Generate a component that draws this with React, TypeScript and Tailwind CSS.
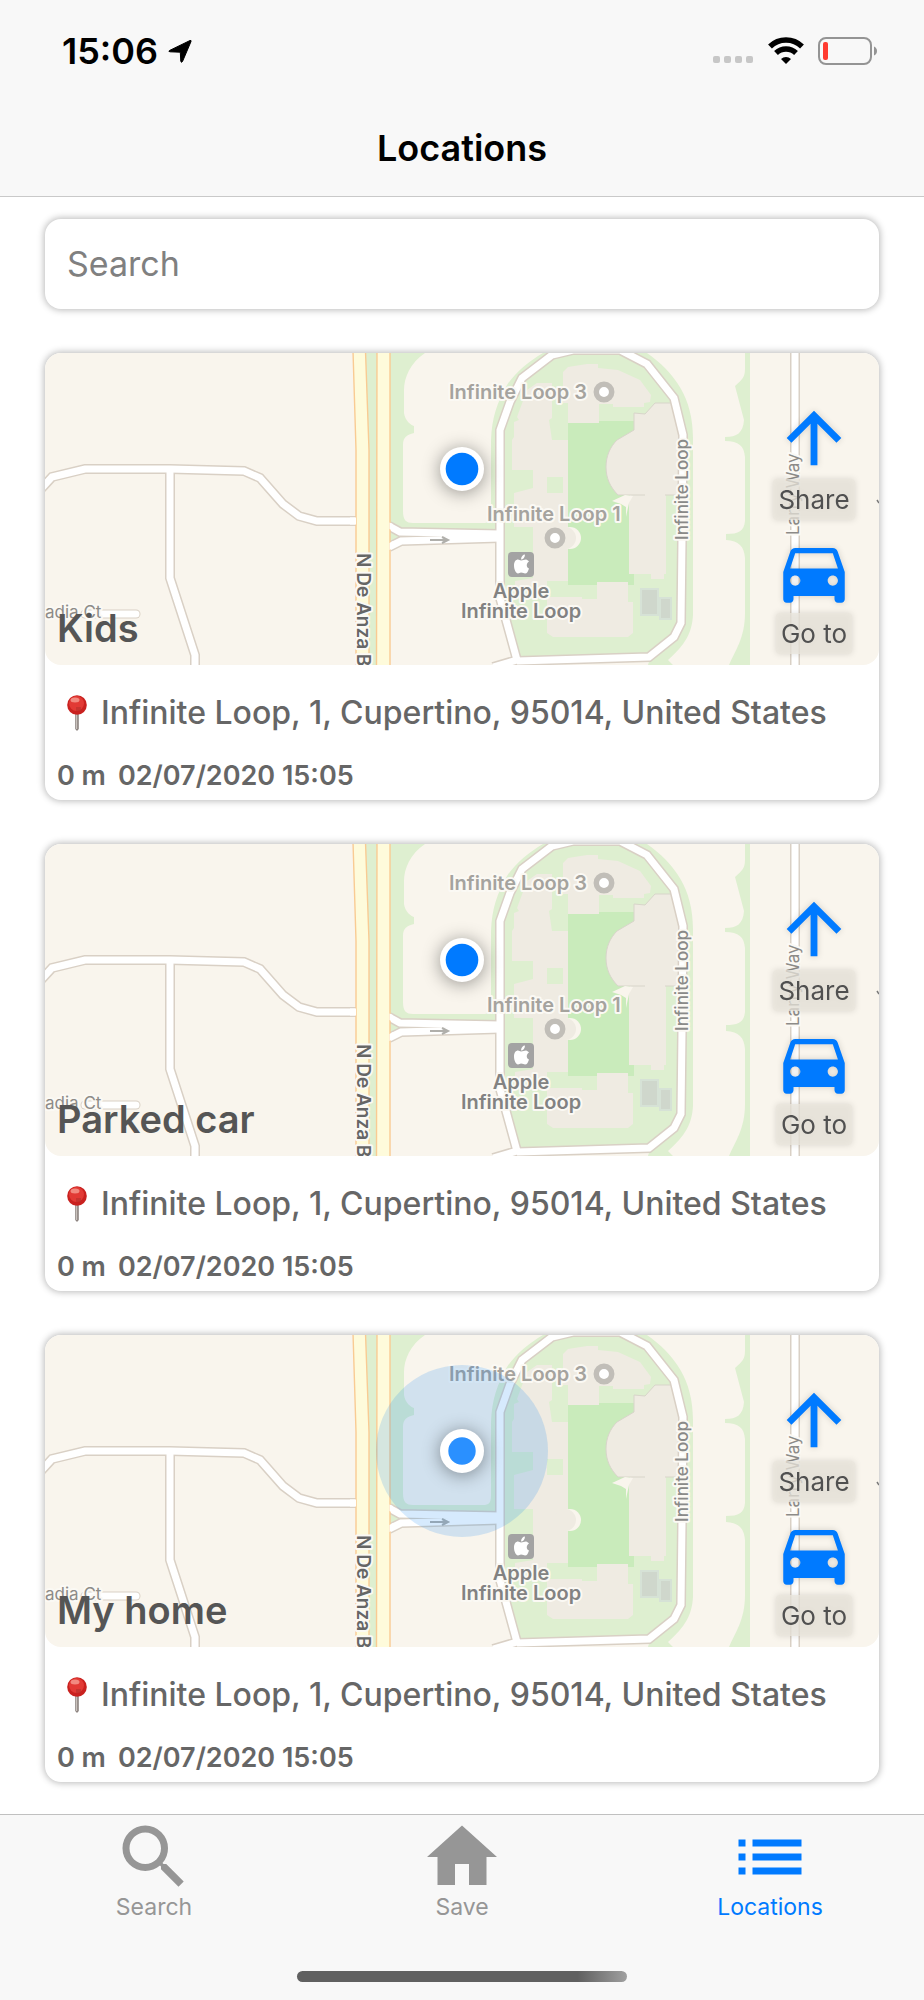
import type { ReactNode } from 'react'

interface SavedLocation {
  id: string
  name: string
  address: string
  distance: string
  savedAt: string
  isNearby?: boolean
}

const LOCATIONS: SavedLocation[] = [
  { id: 'kids', name: 'Kids', address: 'Infinite Loop, 1, Cupertino, 95014, United States', distance: '0 m', savedAt: '02/07/2020 15:05' },
  { id: 'car',  name: 'Parked car', address: 'Infinite Loop, 1, Cupertino, 95014, United States', distance: '0 m', savedAt: '02/07/2020 15:05' },
  { id: 'home', name: 'My home', address: 'Infinite Loop, 1, Cupertino, 95014, United States', distance: '0 m', savedAt: '02/07/2020 15:05', isNearby: true },
]

// every road is drawn twice: a wide casing, then the white surface
const ROADS = [
  'M-4 136L7 124L40 116H125L199 118L215 125L238 151L254 163L272 168H311',
  'M125 116V225L150 302V320',
  'M344 173L355 179L455 181',
  'M344 194L356 188L455 185',
  'M448 314L472 307L455 245V77L465 49L477 25L507 2L528 -3H575L602 11L629 45L638 82L637 187L636 270L629 284L604 304L472 308',
  'M750 -5V320',
]

const ICONS = {
  search: 'M15.5 14h-.79l-.28-.27A6.47 6.47 0 0016 9.5 6.5 6.5 0 109.5 16c1.61 0 3.09-.59 4.23-1.57l.27.28v.79l5 4.99L20.49 19l-4.99-5zm-6 0C7.01 14 5 11.99 5 9.5S7.01 5 9.5 5 14 7.01 14 9.5 11.99 14 9.5 14z',
  home: 'M10 20v-6h4v6h5v-8h3L12 3 2 12h3v8z',
  list: 'M3 13h2v-2H3v2zm0 4h2v-2H3v2zm0-8h2V7H3v2zm4 4h14v-2H7v2zm0 4h14v-2H7v2zM7 7v2h14V7H7z',
  arrow: 'M4 12l1.41 1.41L11 7.83V20h2V7.83l5.58 5.59L20 12l-8-8-8 8z',
  car: 'M18.92 6.01C18.72 5.42 18.16 5 17.5 5h-11c-.66 0-1.21.42-1.42 1.01L3 12v8c0 .55.45 1 1 1h1c.55 0 1-.45 1-1v-1h12v1c0 .55.45 1 1 1h1c.55 0 1-.45 1-1v-8l-2.08-5.99zM6.5 16c-.83 0-1.5-.67-1.5-1.5S5.67 13 6.5 13s1.5.67 1.5 1.5S7.33 16 6.5 16zm11 0c-.83 0-1.5-.67-1.5-1.5s.67-1.5 1.5-1.5 1.5.67 1.5 1.5-.67 1.5-1.5 1.5zM5 11l1.5-4.5h11L19 11H5z',
}

function Icon({ path, className }: { path: string; className: string }) {
  return (
    <svg className={className} viewBox="0 0 24 24" fill="currentColor" aria-hidden="true">
      <path d={path}/>
    </svg>
  )
}

function MapLabel({ children, className, transform, anchor = 'start' }: {
  children: ReactNode; className: string; transform: string; anchor?: 'start' | 'middle'
}) {
  return (
    <text transform={transform} textAnchor={anchor} stroke="#fbf9f4" strokeWidth="4" strokeLinejoin="round" paintOrder="stroke" className={className}>
      {children}
    </text>
  )
}

function MapPreview({ isNearby }: { isNearby?: boolean }) {
  return (
    <svg className="block w-full h-full" viewBox="0 0 834 312" preserveAspectRatio="xMidYMid slice">
      <rect width="834" height="312" fill="#f9f5ed"/>

      {/* greens */}
      <path fill="#deefd0" d="M318 0H602C630 20 648 45 648 85V262C647 280 640 292 623 307L628 312H603L605 305L474 309L455 250V190H345V312H322Z"/>
      <path fill="#f9f5ed" d="M380 0C365 10 359 25 359 37V60C360 68 366 72 369 73V80C362 82 358 84 358 92V158C358 167 361 170 368 170H438C444 170 446 168 446 160V87C447 64 452 50 462 32C470 20 484 8 498 0Z"/>
      <path fill="#deefd0" d="M700 0H705V312H684C690 298 700 285 700 260V205C699 193 694 188 681 187V181C694 181 699 178 700 168V104C699 93 694 88 680 88V84C692 84 698 80 699 67L690 33C698 26 700 24 700 15Z"/>
      <path fill="#c9ebbb" d="M523 70H554V68H589V232H523Z"/>

      {/* buildings */}
      <g fill="#efebe2">
        <path d="M518 19L523 14L542 11H553V15L573 17L595 27L606 42L605 49L599 50V54H568V51H554V70H523V50H518Z"/>
        <path d="M482 37L472 64L474 67L469 69V84L467 87V117H488V135L469 140V174H488V225L470 228V233H502V228H523V87H507L504 67L507 65V30H492Z"/>
        <path d="M585 142H621V221H619V226H606V221H584V150Z"/>
        <path d="M502 244H537V246H552V229H583V249H588V280L583 284H508L502 280Z"/>
      </g>
      <path fill="#deefd0" d="M502 124H518V140H502Z"/>
      <circle cx="525" cy="185" r="11" fill="#f9f5ed"/>
      <circle cx="520" cy="185" r="11" fill="#efebe2"/>
      <path fill="#efebe2" stroke="#d8d5ca" d="M620 142H637L638 87L627 50H610L600 61L589 60V77L572 87C565 94 561 103 561 114C561 125 565 134 573 142H600"/>
      <path fill="#efebe2" d="M600 139H620V144H600Z"/>
      <path fill="#f9f5ed" d="M567 148L580 142L588 143L584 150L581 164V154L576 151Z"/>
      <path fill="#cfd7cc" stroke="#d6e2d6" strokeWidth="2" d="M596 236H613V262H596ZM615 245H626V266H615Z"/>

      {/* roads */}
      <g fill="none" stroke="#d9d0c5" strokeWidth="10">
        {ROADS.map((d) => <path key={d} d={d}/>)}
        <path d="M40 261H91" strokeLinecap="round" strokeWidth="9"/>
      </g>
      <g fill="none" stroke="#fff" strokeWidth="7">
        {ROADS.map((d) => <path key={d} d={d}/>)}
        <path d="M40 261H91" strokeLinecap="round" strokeWidth="7"/>
      </g>
      <path fill="none" stroke="#b0afab" strokeWidth="2" d="M385 187H403M397 184L403 187L397 190"/>
      <path fill="#fefbdb" stroke="#f9cb93" strokeWidth="1.4" d="M308 -2L311 97V316H324V97L320.500 -2ZM332 -2H345V316H331.500Z"/>
      <path fill="#fff" d="M305 164.500H311V171.500H305ZM344.500 169.500L348 171V178L344.500 176ZM344.500 190L348 188V195L344.500 197Z"/>

      {/* labels */}
      <g style={{ fontFamily: 'Inter, sans-serif' }}>
        <MapLabel transform="translate(0 265)" className="text-[17px] fill-[#8d8b88]">adia Ct</MapLabel>
        <MapLabel transform="translate(312 200) rotate(90)" className="text-[19px] font-semibold fill-[#666666]">N De Anza B</MapLabel>
        <MapLabel transform="translate(643 187) rotate(-90)" className="text-[17px] font-medium fill-[#8a8a88]">Infinite Loop</MapLabel>
        <MapLabel transform="translate(754 182) rotate(-90)" className="text-[17px] fill-[#8d8b88]">Larry Way</MapLabel>
        <MapLabel transform="translate(404 46)" className="text-[20px] font-semibold fill-[#a5a39e]">Infinite Loop 3</MapLabel>
        {!isNearby && (
          <MapLabel transform="translate(442 168)" className="text-[20px] font-semibold fill-[#a5a39e]">Infinite Loop 1</MapLabel>
        )}
        <MapLabel transform="translate(476 245)" anchor="middle" className="text-[20px] font-semibold fill-[#828282]">Apple</MapLabel>
        <MapLabel transform="translate(476 265)" anchor="middle" className="text-[20px] font-semibold fill-[#828282]">Infinite Loop</MapLabel>
      </g>
      <g fill="#fff" stroke="#c1beb8" strokeWidth="5.500">
        <circle cx="559" cy="39" r="7.700"/>
        {!isNearby && <circle cx="510" cy="185" r="7.700"/>}
      </g>
      <rect x="463" y="199" width="26" height="25" rx="4" fill="#a3a3a3"/>
      <path fill="#fff" d="M480 203C480 206 478 208 476 208C476 205 478 203 480 203ZM476 209C478 209 479 208 481 208C482 208 483 209 484 210C481 212 481 216 484 217C483 220 482 222 480 222C479 222 478 221 476 221C475 221 474 222 473 222C471 222 469 218 469 214C469 210 471 208 473 208C474 208 475 209 476 209Z" transform="translate(0 -1.500)"/>
      <path stroke="#777" strokeWidth="1.500" d="M832 147L834 150"/>

      {/* current position */}
      {isNearby && <circle cx="417" cy="116" r="86" fill="#0a80f5" fillOpacity=".17"/>}
      <circle cx="417" cy="116" r="22" fill="#fff" className="drop-shadow-[0_2px_9px_rgba(0,0,0,0.4)]"/>
      <circle cx="417" cy="116" r={isNearby ? 13.7 : 16.3} fill={isNearby ? '#2a90ff' : '#007aff'}/>
    </svg>
  )
}

function MapAction({ label, icon }: { label: string; icon: string }) {
  return (
    <button type="button" className="flex flex-col items-center text-[#007aff] drop-shadow-[0_0_3px_rgba(0,0,0,0.16)]">
      <Icon path={icon} className="size-[82px]"/>
      <span className="rounded-sm bg-[#e9e5dc]/75 px-[5px] text-[26px] leading-[41px] text-[#505050]">{label}</span>
    </button>
  )
}

function PinIcon() {
  return (
    <svg className="w-5 h-9 shrink-0" viewBox="0 0 20 36" aria-hidden="true">
      <path d="M8.200 17H11.800V34L10 36L8.200 34Z" fill="#8d8480"/>
      <path d="M9 19H10.200V34H9Z" fill="#c9c2bd"/>
      <circle cx="10" cy="10" r="9.800" fill="#c9211f"/>
      <circle cx="9.500" cy="8.500" r="7.500" fill="#e23a35"/>
      <ellipse cx="8" cy="5" rx="4.500" ry="2.500" fill="#f28a80"/>
      <path d="M9 12H14V16H9Z" fill="#b5302c" opacity=".6"/>
    </svg>
  )
}

function LocationCard({ location }: { location: SavedLocation }) {
  return (
    <article className="rounded-2xl bg-white shadow-[0_0_7px_1px_rgba(0,0,0,0.28)]">
      <div className="relative h-[312px] overflow-hidden rounded-2xl">
        <MapPreview isNearby={location.isNearby}/>
        <h2 className="absolute bottom-3.5 left-3 text-[38px] leading-[46px] font-semibold text-[#555555]">{location.name}</h2>
        <div className="absolute right-6 bottom-[11px] flex flex-col items-center gap-[11px]">
          <MapAction label="Share" icon={ICONS.arrow}/>
          <MapAction label="Go to" icon={ICONS.car}/>
        </div>
      </div>
      <div className="px-3 pt-7 pb-1.5 text-[#666666]">
        <p className="flex items-center gap-3.5 pl-2.5 text-[32px] leading-10 font-medium">
          <PinIcon/>
          {location.address}
        </p>
        <p className="mt-[25px] flex gap-3 text-[27px] leading-9 font-semibold">
          <span>{location.distance}</span>
          <time>{location.savedAt}</time>
        </p>
      </div>
    </article>
  )
}

function StatusBar() {
  return (
    <div className="flex h-[102px] items-center justify-between pl-[62px] pr-[46px]">
      <div className="flex items-center gap-2.5 text-[36px] leading-10 font-semibold">
        15:06
        <svg className="size-6" viewBox="0 0 24 24" aria-hidden="true">
          <path d="M1.500 11.500L22 1.500Q23.500 1 23 2.500L14.500 22.500Q13.500 24 12.800 22.500L12.300 13.200L2 12.800Q0 12.500 1.500 11.500Z" stroke="#000" strokeLinejoin="round"/>
        </svg>
      </div>
      <div className="flex items-center gap-3.5">
        <svg className="w-[42px] h-7" viewBox="0 0 42 28" fill="#c7c7c7" aria-hidden="true">
          {[0, 11, 22, 33].map((x) => <rect key={x} x={x + 1} y="19" width="7" height="7" rx="2"/>)}
        </svg>
        <svg className="w-9 h-7" viewBox="0 0 36 28" fill="none" stroke="#000" aria-hidden="true">
          <path d="M2 9.500A23 23 0 0134 9.500" strokeWidth="5.500"/>
          <path d="M8 16A14.500 14.500 0 0128 16" strokeWidth="5.500"/>
          <path d="M18 27L13 22A7.500 7.500 0 0123 22Z" fill="#000" stroke="none"/>
        </svg>
        <svg className="w-[60px] h-7" viewBox="0 0 60 28" aria-hidden="true">
          <rect x="1" y="1" width="52" height="26" rx="7" fill="none" stroke="#949494" strokeWidth="2"/>
          <rect x="5" y="5" width="5" height="18" rx="2" fill="#ff3b30"/>
          <path d="M56 9.500Q59 11 59 14T56 18.500Z" fill="#949494"/>
        </svg>
      </div>
    </div>
  )
}

const TABS = [
  { label: 'Search', icon: ICONS.search },
  { label: 'Save', icon: ICONS.home },
  { label: 'Locations', icon: ICONS.list, active: true },
]

export default function App() {
  return (
    <div className="flex min-h-screen flex-col bg-white font-['Inter',sans-serif] text-black">
      <header className="border-b border-[#c9c9c9] bg-[#f8f8f8]">
        <StatusBar/>
        <h1 className="pt-6 pb-[26px] text-center text-[36px] leading-11 font-semibold">Locations</h1>
      </header>

      <main className="flex flex-col gap-11 px-[45px] pt-[22px] pb-8">
        <input type="search" aria-label="Search" placeholder="Search"
          className="h-[90px] w-full rounded-2xl bg-white px-[22px] pb-0.5 text-[34px] shadow-[0_0_7px_1px_rgba(0,0,0,0.28)] outline-none placeholder:text-[#808080]"/>
        {LOCATIONS.map((location) => <LocationCard key={location.id} location={location}/>)}
      </main>

      <footer className="mt-auto border-t border-[#c0c0c0] bg-[#f8f8f8] pb-[18px]">
        <nav className="grid grid-cols-3">
          {TABS.map((tab) => (
            <a key={tab.label} href="#" aria-current={tab.active ? 'page' : undefined}
              className={`flex flex-col items-center text-[23px] leading-6 ${tab.active ? 'text-[#007aff]' : 'text-[#969696]'}`}>
              <Icon path={tab.icon} className="-mb-1 size-[84px]"/>
              {tab.label}
            </a>
          ))}
        </nav>
        <div className="mx-auto mt-[52px] h-[11px] w-[330px] rounded-full bg-linear-to-r from-[#606060] from-85% to-[#a0a0a0]"/>
      </footer>
    </div>
  )
}
